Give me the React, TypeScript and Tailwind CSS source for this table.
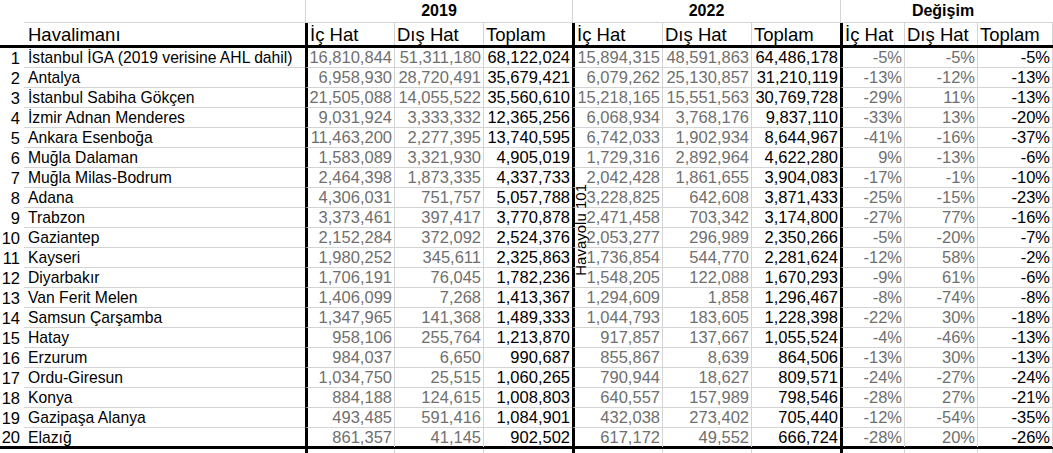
const rows: [string, string, string, string, string, string, string, string, string, string][] = [
  ['İstanbul İGA (2019 verisine AHL dahil)', '16,810,844', '51,311,180', '68,122,024', '15,894,315', '48,591,863', '64,486,178', '-5%', '-5%', '-5%'],
  ['Antalya', '6,958,930', '28,720,491', '35,679,421', '6,079,262', '25,130,857', '31,210,119', '-13%', '-12%', '-13%'],
  ['İstanbul Sabiha Gökçen', '21,505,088', '14,055,522', '35,560,610', '15,218,165', '15,551,563', '30,769,728', '-29%', '11%', '-13%'],
  ['İzmir Adnan Menderes', '9,031,924', '3,333,332', '12,365,256', '6,068,934', '3,768,176', '9,837,110', '-33%', '13%', '-20%'],
  ['Ankara Esenboğa', '11,463,200', '2,277,395', '13,740,595', '6,742,033', '1,902,934', '8,644,967', '-41%', '-16%', '-37%'],
  ['Muğla Dalaman', '1,583,089', '3,321,930', '4,905,019', '1,729,316', '2,892,964', '4,622,280', '9%', '-13%', '-6%'],
  ['Muğla Milas-Bodrum', '2,464,398', '1,873,335', '4,337,733', '2,042,428', '1,861,655', '3,904,083', '-17%', '-1%', '-10%'],
  ['Adana', '4,306,031', '751,757', '5,057,788', '3,228,825', '642,608', '3,871,433', '-25%', '-15%', '-23%'],
  ['Trabzon', '3,373,461', '397,417', '3,770,878', '2,471,458', '703,342', '3,174,800', '-27%', '77%', '-16%'],
  ['Gaziantep', '2,152,284', '372,092', '2,524,376', '2,053,277', '296,989', '2,350,266', '-5%', '-20%', '-7%'],
  ['Kayseri', '1,980,252', '345,611', '2,325,863', '1,736,854', '544,770', '2,281,624', '-12%', '58%', '-2%'],
  ['Diyarbakır', '1,706,191', '76,045', '1,782,236', '1,548,205', '122,088', '1,670,293', '-9%', '61%', '-6%'],
  ['Van Ferit Melen', '1,406,099', '7,268', '1,413,367', '1,294,609', '1,858', '1,296,467', '-8%', '-74%', '-8%'],
  ['Samsun Çarşamba', '1,347,965', '141,368', '1,489,333', '1,044,793', '183,605', '1,228,398', '-22%', '30%', '-18%'],
  ['Hatay', '958,106', '255,764', '1,213,870', '917,857', '137,667', '1,055,524', '-4%', '-46%', '-13%'],
  ['Erzurum', '984,037', '6,650', '990,687', '855,867', '8,639', '864,506', '-13%', '30%', '-13%'],
  ['Ordu-Giresun', '1,034,750', '25,515', '1,060,265', '790,944', '18,627', '809,571', '-24%', '-27%', '-24%'],
  ['Konya', '884,188', '124,615', '1,008,803', '640,557', '157,989', '798,546', '-28%', '27%', '-21%'],
  ['Gazipaşa Alanya', '493,485', '591,416', '1,084,901', '432,038', '273,402', '705,440', '-12%', '-54%', '-35%'],
  ['Elazığ', '861,357', '41,145', '902,502', '617,172', '49,552', '666,724', '-28%', '20%', '-26%'],
]

// value columns are 1..9; 1, 4 and 7 open a group with a thick rule
const groupStart = (i: number) => i === 1 || i === 4 || i === 7
const beforeGroup = (i: number) => i === 3 || i === 6
const isTotal = (i: number) => i === 3 || i === 6 || i === 9

const gridCols =
  'grid grid-cols-[24px_281px_90px_89px_88px_91px_89px_88px_65px_73px_75px]'

const headers = ['İç Hat', 'Dış Hat', 'Toplam', 'İç Hat', 'Dış Hat', 'Toplam', 'İç Hat', 'Dış Hat', 'Toplam']

export default function App() {
  return (
    <div className="relative h-[453px] w-[1053px] overflow-hidden bg-white font-['Liberation_Sans',Arial,sans-serif] text-[16.5px] leading-[19px] text-black">
      {/* year row */}
      <div className={`${gridCols} h-[23px] text-[16px] font-bold`}>
        <div />
        <div className="border-b border-[#d4d4d4]" />
        <div className="col-span-3 flex items-end justify-center border-b border-l border-[#d4d4d4] pb-[2px]">
          2019
        </div>
        <div className="col-span-3 flex items-end justify-center border-b border-l border-[#d4d4d4] pb-[2px]">
          2022
        </div>
        <div className="col-span-3 flex items-end justify-center border-b border-l border-[#d4d4d4] pb-[2px] pr-2">
          Değişim
        </div>
      </div>

      {/* header row */}
      <div className={`${gridCols} h-[25px] border-b-[3px] border-black text-[18.5px] leading-[21px]`}>
        <div />
        <div className="flex items-end pl-[4px]">Havalimanı</div>
        {headers.map((h, i) => (
          <div
            key={i}
            className={`flex items-end whitespace-nowrap pl-[2px] ${groupStart(i + 1) ? 'border-l-[3px] border-black' : ''} ${
              beforeGroup(i + 1) ? '' : 'border-r border-r-[#d4d4d4]'
            }`}
          >
            {h}
          </div>
        ))}
      </div>

      {/* data rows */}
      {rows.map((r, idx) => {
        const last = idx === rows.length - 1
        return (
          <div
            key={idx}
            className={`${gridCols} ${last ? 'h-[21px] border-b-[3px] border-black' : 'h-[20px]'}`}
          >
            <div className="flex items-end justify-end pr-[4px]">{idx + 1}</div>
            <div
              className={`flex items-end whitespace-nowrap pl-[4px] text-[15.7px] ${
                last ? '' : 'border-b border-[#d4d4d4]'
              }`}
            >
              {r[0]}
            </div>
            {r.slice(1).map((v, j) => {
              const c = j + 1
              return (
                <div
                  key={c}
                  className={`flex items-end justify-end pr-[2px] ${last ? '' : 'border-b border-b-[#d4d4d4]'} ${
                    groupStart(c) ? 'border-l-[3px] border-l-black' : ''
                  } ${beforeGroup(c) ? '' : 'border-r border-r-[#d4d4d4]'} ${
                    isTotal(c) ? 'text-black' : 'text-[#6f6f6f]'
                  }`}
                >
                  {v}
                </div>
              )
            })}
          </div>
        )
      })}

      {/* partial next row */}
      <div className={`${gridCols} h-[20px]`}>
        <div />
        <div />
        {[1, 2, 3, 4, 5, 6, 7, 8, 9].map((c) => (
          <div
            key={c}
            className={`${groupStart(c) ? 'border-l-[3px] border-l-black' : ''} ${
              beforeGroup(c) ? '' : 'border-r border-r-[#d4d4d4]'
            }`}
          />
        ))}
      </div>

      {/* text box overlay */}
      <div className="absolute left-[574px] top-[184px] rotate-180 text-[15px] leading-[13px] [writing-mode:vertical-rl]">
        Havayolu 101
      </div>
    </div>
  )
}
